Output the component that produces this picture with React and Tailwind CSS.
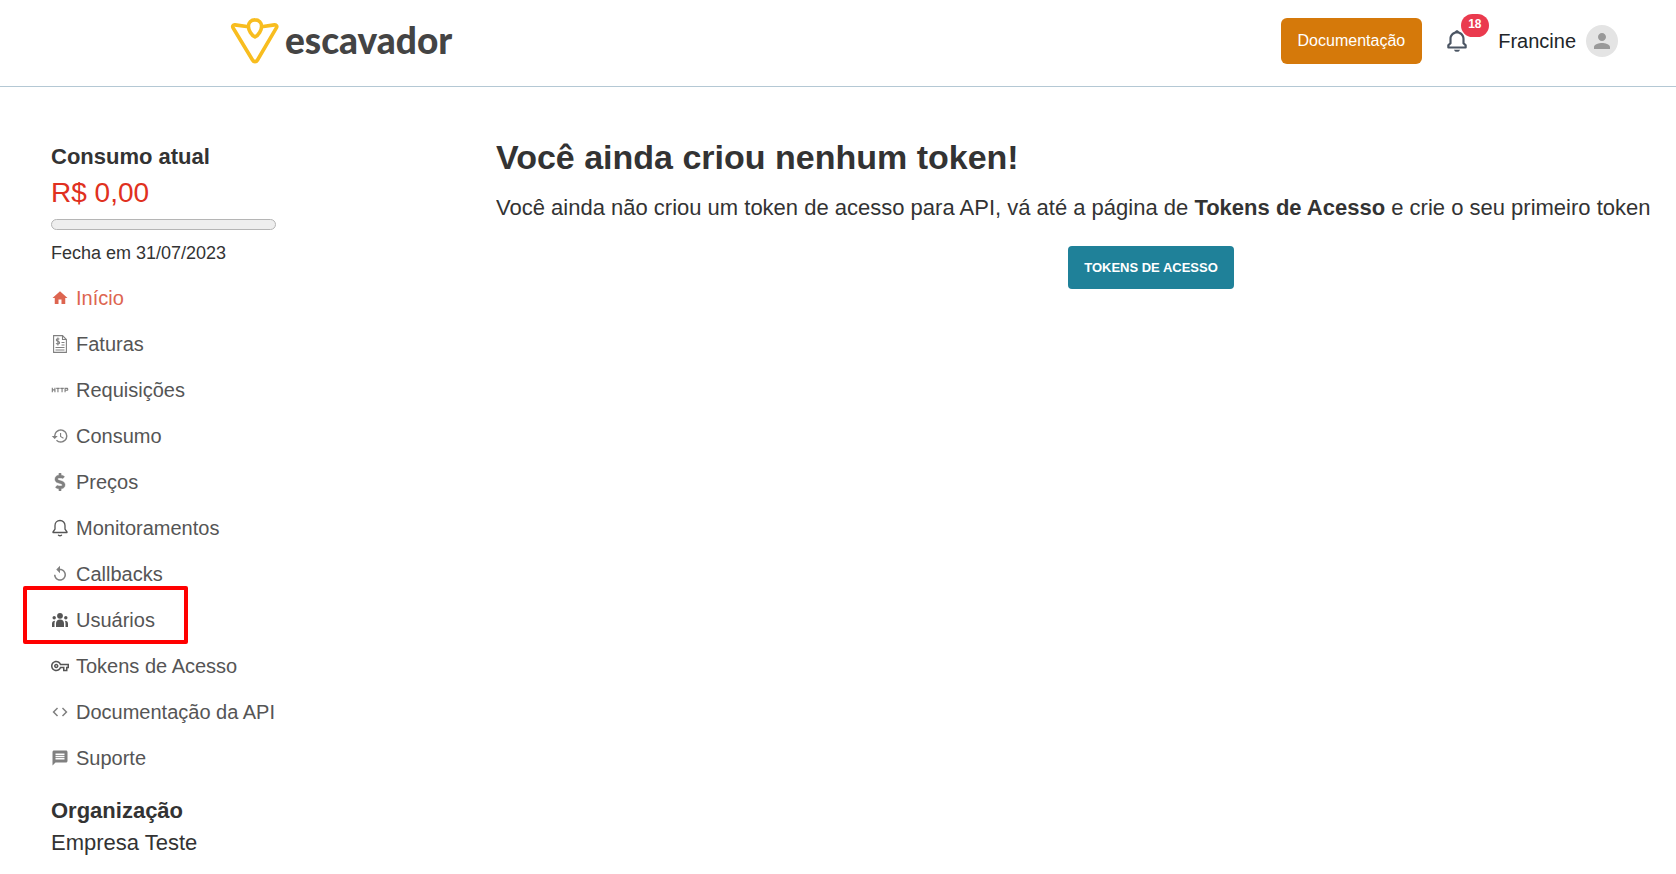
import { MdHome, MdHttp, MdHistory, MdReplay, MdOutlineVpnKey, MdCode, MdMessage, MdPerson } from 'react-icons/md';
import { FaDollarSign } from 'react-icons/fa';
import { BiBell } from 'react-icons/bi';

const InvoiceIcon = ({ className }) => (
    <svg viewBox="0 0 14 18" fill="none" stroke="currentColor" strokeWidth="1.1" className={className}>
        <path d="M.6.6h8.900l3.900 3.900v12.900H.6z" />
        <path d="M9.500.6v3.900h3.900" />
        <path d="M6.400 4.300C5.900 3.400 3.300 3.400 3.300 5c0 1.700 3.300 1 3.300 2.800 0 1.500-2.900 1.500-3.500.5M4.900 2.500v8" />
        <path d="M8.500 7.500h3M8.500 10h3M2.500 12.500h9M2.500 15h9" />
    </svg>
);

const BellIcon = ({ className }) => (
    <svg viewBox="0 0 18 18" fill="none" stroke="currentColor" strokeWidth="1.3" strokeLinejoin="round" strokeLinecap="round" className={className}>
        <path d="M9 1.500c-3 0-5 2.200-5 5v3.700L2 13v.5h14V13l-2-2.800V6.500c0-2.800-2-5-5-5z" />
        <path d="M7.500 16.200c.8.600 2.200.6 3 0" />
    </svg>
);

const PeopleIcon = ({ className }) => (
    <svg viewBox="0 0 18 18" fill="currentColor" className={className}>
        <circle cx="9" cy="4.800" r="2.900" />
        <circle cx="3.200" cy="6.800" r="1.700" />
        <circle cx="14.800" cy="6.800" r="1.700" />
        <path d="M5 16v-3.500c0-2.400 1.700-3.900 4-3.900s4 1.500 4 3.900V16z" />
        <path d="M1 16v-3.300c0-1.900 1.100-2.900 3.100-2.900-.4.800-.6 1.700-.6 2.700V16zM17 16v-3.300c0-1.900-1.100-2.900-3.100-2.900.4.800.6 1.700.6 2.700V16z" />
    </svg>
);

const menu = [
    { icon: MdHome, title: 'Início', active: true, color: 'text-[#dd6550]' },
    { icon: InvoiceIcon, title: 'Faturas', color: 'text-[#808080]' },
    { icon: MdHttp, title: 'Requisições', color: 'text-[#808080]' },
    { icon: MdHistory, title: 'Consumo', color: 'text-[#808080]' },
    { icon: FaDollarSign, title: 'Preços', color: 'text-[#808080] stroke-current stroke-[12]' },
    { icon: BellIcon, title: 'Monitoramentos', color: 'text-[#555555]' },
    { icon: MdReplay, title: 'Callbacks', color: 'text-[#808080]' },
    { icon: PeopleIcon, title: 'Usuários', highlight: true, color: 'text-[#555555]' },
    { icon: MdOutlineVpnKey, title: 'Tokens de Acesso', color: 'text-[#555555]' },
    { icon: MdCode, title: 'Documentação da API', color: 'text-[#808080]' },
    { icon: MdMessage, title: 'Suporte', color: 'text-[#808080]' },
];

const Logo = () => (
    <a href="#" className="flex items-center gap-[5px] text-[#444444]">
        <svg viewBox="0 0 50 48" fill="none" stroke="#f8bd1f" strokeWidth="3.6" strokeLinejoin="round" className="w-[50px] h-12">
            <path d="M18.500 9.800L5 7.900C3 7.700 2.200 9.200 3 10.700L22.500 43c1.300 2.200 3.700 2.200 5 0L46.500 10.700c.8-1.500 0-3-2-2.800L31.500 9.800" />
            <path d="M25 2.900c-3.900 0-6.600 2.700-6.600 6.400 0 3.900 3.100 8.900 6.600 10.700 3.500-1.800 6.600-6.800 6.600-10.700 0-3.700-2.700-6.400-6.600-6.400z" />
        </svg>
        <span className="pb-0.5 font-[Lato,sans-serif] font-black text-[37px] leading-10">escavador</span>
    </a>
);

const Header = () => (
    <header className="flex items-center justify-between h-[87px] pl-[230px] pr-[58px] pb-1 border-b border-[#b4c8d4]">
        <Logo />
        <div className="flex items-center">
            <a href="#" className="flex items-center h-[46px] px-[17px] rounded-md bg-[#d5790a] text-white text-base">
                Documentação
            </a>
            <button type="button" aria-label="Notificações" className="relative ml-[22px] text-[#4b5563]">
                <BiBell size={26} />
                <span className="absolute -top-[14px] left-[17px] h-[23px] px-[7px] rounded-full bg-[#ea3a4e] text-white text-xs leading-5 font-bold">
                    18
                </span>
            </button>
            <span className="ml-7 text-xl text-[#212529]">Francine</span>
            <span className="ml-[10px] flex items-center justify-center size-8 rounded-full bg-[#e4e4e4] text-[#999999]">
                <MdPerson size={24} />
            </span>
        </div>
    </header>
);

const Sidebar = () => (
    <aside className="w-[496px] shrink-0 pt-1 pl-[51px] text-[#333333]">
        <h2 className="text-[22px] leading-8 font-bold">Consumo atual</h2>
        <p className="text-[28px] leading-10 text-[#e03020]">R$ 0,00</p>
        <div role="progressbar" aria-label="Consumo atual" aria-valuenow={0} className="mt-1.5 w-[225px] h-[11px] rounded-full border border-[#b5b5b5] bg-[#eeeeee]" />
        <p className="mt-[7px] text-lg leading-8">Fecha em 31/07/2023</p>

        <nav className="mt-1.5">
            <ul>
                {menu.map((item) => (
                    <li key={item.title} className="relative h-[46px] flex items-center">
                        <a href="#" className={`flex items-center gap-[7px] text-xl ${item.active ? 'text-[#dd6550]' : 'text-[#555555]'}`}>
                            <item.icon className={`size-[18px] ${item.color}`} />
                            {item.title}
                        </a>
                        {item.highlight && (
                            <span className="absolute -top-[11px] -left-7 w-[165px] h-[58px] border-4 border-[#ff0000] rounded-xs pointer-events-none" />
                        )}
                    </li>
                ))}
            </ul>
        </nav>

        <h2 className="mt-[14px] text-[22px] leading-8 font-bold">Organização</h2>
        <p className="text-[22px] leading-8">Empresa Teste</p>
    </aside>
);

const EmptyTokens = () => (
    <main className="flex-1 min-w-0 overflow-hidden text-[#333333]">
        <div className="w-[1310px]">
            <h1 className="text-[34px] leading-10 font-bold">Você ainda criou nenhum token!</h1>
            <p className="mt-[15px] text-[22px] leading-8 whitespace-nowrap">
                Você ainda não criou um token de acesso para API, vá até a página de <b>Tokens de Acesso</b> e crie o seu primeiro token
            </p>
            <div className="mt-[22px] flex justify-center">
                <button type="button" className="h-[43px] px-4 rounded-sm bg-[#1f8199] text-white text-[13px] font-bold uppercase">
                    Tokens de Acesso
                </button>
            </div>
        </div>
    </main>
);

const App = () => {
    return (
        <div className="min-h-screen bg-white font-['Liberation_Sans',Arial,sans-serif]">
            <Header />
            <div className="flex pt-[50px]">
                <Sidebar />
                <EmptyTokens />
            </div>
        </div>
    );
};

export default App;
